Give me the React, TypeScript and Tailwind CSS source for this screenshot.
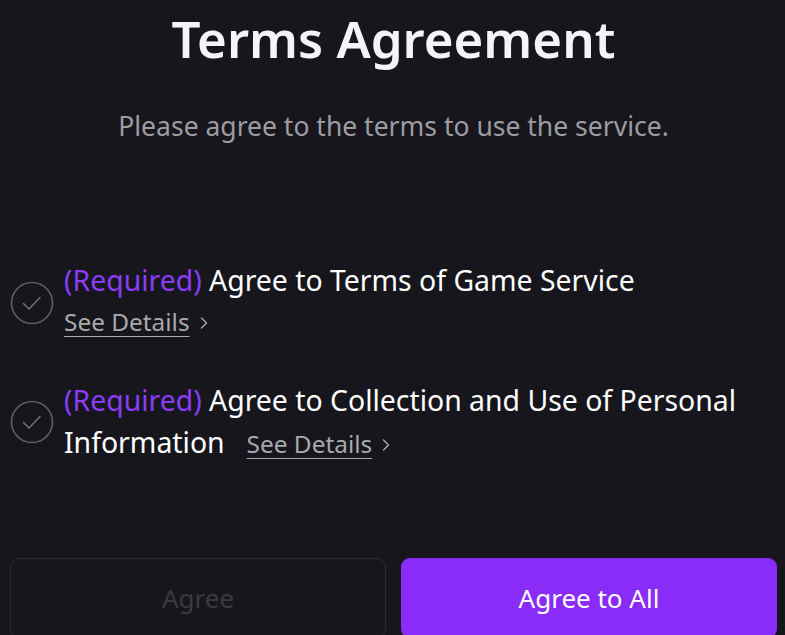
import { ChevronRight } from 'lucide-react';

function CheckCircle() {
  return (
    <svg width="44" height="44" viewBox="0 0 44 44" className="shrink-0">
      <circle cx="22" cy="22" r="20.5" fill="none" stroke="#5f5f64" strokeWidth="1.6" />
      <path d="M13.5 22.5 L19 28 L30 16.5" fill="none" stroke="#6f6f74" strokeWidth="1.6" strokeLinecap="round" strokeLinejoin="round" />
    </svg>
  );
}

function SeeDetails() {
  return (
    <span className="inline-flex items-center gap-[4px] text-[24.4px] text-[#a9a9ad]">
      <span className="underline underline-offset-[5px] decoration-1">See Details</span>
      <ChevronRight size={20} strokeWidth={1.6} className="mt-[2px]" />
    </span>
  );
}

export default function App() {
  return (
    <div
      className="h-[635px] w-[785px] overflow-hidden bg-[#17161c] pl-[10px] pr-[8px] text-white"
      style={{ fontFamily: '"Noto Sans", "Open Sans", sans-serif' }}
    >
      {/* Header */}
      <h1 className="text-center text-[51px] font-semibold leading-[76px] text-[#f4f4f6]">
        Terms Agreement
      </h1>
      <p className="mt-[32px] text-center text-[26.5px] leading-[36px] text-[#9c9ca1]">
        Please agree to the terms to use the service.
      </p>

      {/* Terms list */}
      <div className="mt-[115px] flex flex-col gap-[33px]">
        <div className="flex items-center gap-[10px]">
          <CheckCircle />
          <div className="flex flex-col">
            <span className="text-[28.4px] leading-[42px]">
              <span className="text-[#8a3cf7]">(Required)</span> Agree to Terms of Game Service
            </span>
            <span className="leading-[42px]">
              <SeeDetails />
            </span>
          </div>
        </div>
        <div className="flex items-center gap-[10px]">
          <CheckCircle />
          <p className="text-[28.4px] leading-[42px]">
            <span className="text-[#8a3cf7]">(Required)</span> Agree to Collection and Use of Personal
            <br />
            Information
            <span className="ml-[22px]">
              <SeeDetails />
            </span>
          </p>
        </div>
      </div>

      {/* Actions */}
      <div className="mt-[93px] grid grid-cols-2 gap-[15px]">
        <button className="h-[80px] rounded-[9px] border border-[#2c2c32] text-[26px] text-[#3a3a40]">
          Agree
        </button>
        <button className="h-[80px] rounded-[9px] bg-[#8a2cf8] text-[26px] text-white">
          Agree to All
        </button>
      </div>
    </div>
  );
}
